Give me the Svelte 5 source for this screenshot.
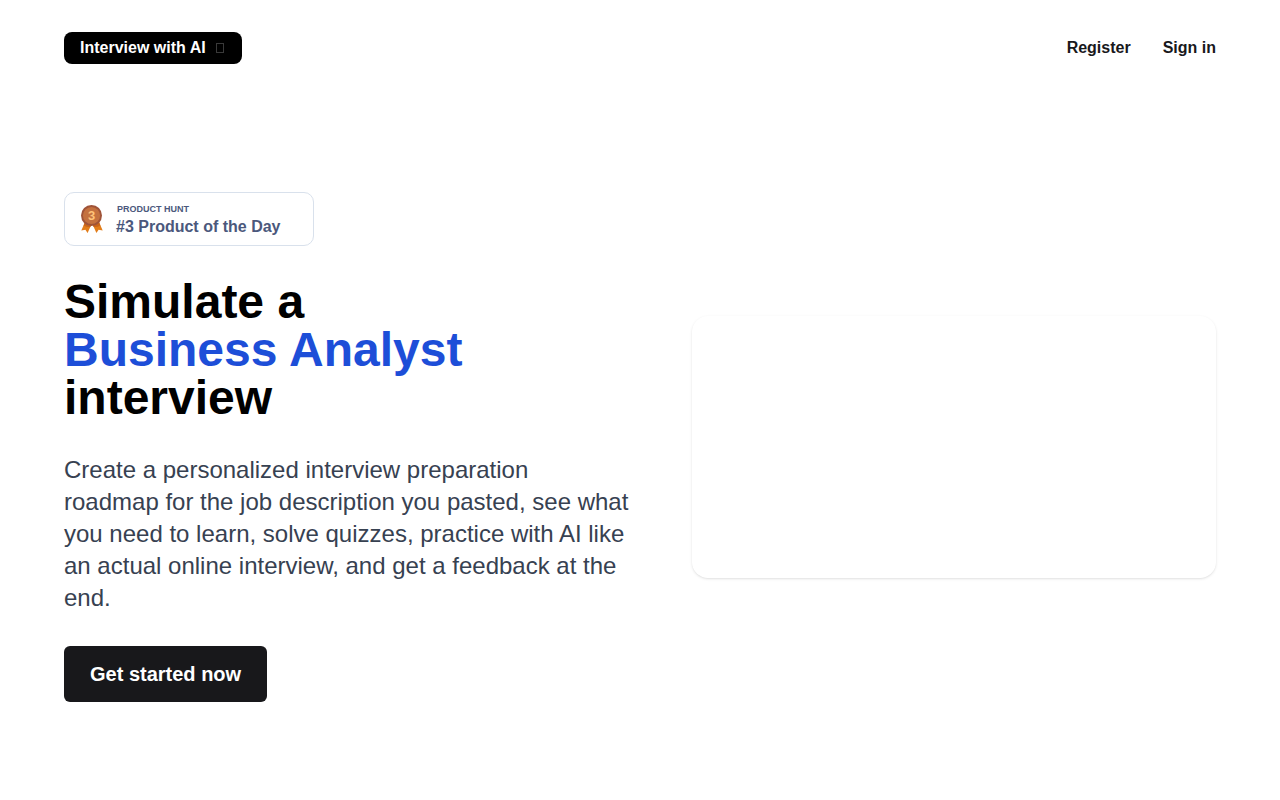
<script lang="ts">
	const role = 'Business Analyst';
</script>

<div class="page">
	<header>
		<a class="brand" href="/">
			Interview with AI
			<svg viewBox="0 0 12 12" width="12" height="12" aria-hidden="true">
				<rect x="2.5" y="1.5" width="7" height="9" fill="none" stroke="#3a3a3a" />
			</svg>
		</a>
		<nav>
			<a href="/register">Register</a>
			<a href="/login">Sign in</a>
		</nav>
	</header>

	<main>
		<section class="intro">
			<a class="badge" href="/product-hunt" aria-label="Product Hunt, #3 Product of the Day">
				<svg viewBox="0 0 22 28" width="22" height="28" aria-hidden="true">
					<path d="M4 17 L0.3 25.4 L4.4 24.7 L6.6 28 L10.6 19 Z" fill="#e27d1a" />
					<path d="M18 17 L21.7 25.4 L17.6 24.7 L15.4 28 L11.4 19 Z" fill="#e27d1a" />
					<path d="M4 17 L2.6 20.5 Q5.5 22.4 9.4 22 L10.6 19 Z M18 17 L19.4 20.5 Q16.5 22.4 12.6 22 L11.4 19 Z" fill="#c9651a" />
					<circle cx="10.5" cy="10.5" r="10.5" fill="#9f5338" />
					<circle cx="10.5" cy="10.5" r="8.6" fill="#c4713f" />
					<text x="10.5" y="15" text-anchor="middle">3</text>
				</svg>
				<span class="badge-text">
					<span class="badge-source">PRODUCT HUNT</span>
					<span class="badge-rank">#3 Product of the Day</span>
				</span>
			</a>

			<h1>Simulate a <br /><span class="role">{role}</span><br /> interview</h1>

			<p>
				Create a personalized interview preparation roadmap for the job description you pasted, see what you
				need to learn, solve quizzes, practice with AI like an actual online interview, and get a feedback at
				the end.
			</p>

			<button type="button">Get started now</button>
		</section>

		<div class="preview"></div>
	</main>
</div>

<style>
	:global(body) {
		background: #fff;
	}

	.page {
		padding: 32px 64px;
		font-family: 'Liberation Sans', Arial, sans-serif;
		color: #18181b;
	}

	header,
	nav {
		display: flex;
		align-items: center;
	}

	header {
		justify-content: space-between;
	}

	nav {
		gap: 32px;
	}

	a {
		color: inherit;
		text-decoration: none;
		font-weight: 700;
		font-size: 16px;
		line-height: 24px;
	}

	.brand {
		display: flex;
		align-items: center;
		gap: 8px;
		padding: 4px 16px;
		border-radius: 8px;
		background: #000;
		color: #fff;
	}

	main {
		display: grid;
		grid-template-columns: minmax(0, 1fr) minmax(0, 1fr);
		align-items: center;
		padding: 128px 0 64px;
	}

	.intro {
		display: flex;
		flex-direction: column;
		align-items: flex-start;
		gap: 32px;
		padding-right: 11px;
	}

	/* Product Hunt badge */
	.badge {
		display: flex;
		align-items: center;
		gap: 13px;
		box-sizing: border-box;
		width: 250px;
		height: 54px;
		padding: 0 16px;
		border: 1px solid #d9e1ec;
		border-radius: 10px;
		background: #fff;
		color: #4b587c;
	}

	.badge svg text {
		font-size: 13px;
		font-weight: 700;
		fill: #ffc278;
	}

	.badge-text {
		display: flex;
		flex-direction: column;
		gap: 2px;
		padding-top: 2px;
	}

	.badge-source {
		padding-left: 1px;
		font-size: 9px;
		line-height: 12px;
	}

	.badge-rank {
		font-size: 16px;
		line-height: 20px;
	}

	h1 {
		margin: 0;
		font-size: 48px;
		line-height: 48px;
		font-weight: 700;
		color: #000;
	}

	.role {
		color: #1d4ed8;
	}

	p {
		margin: 0;
		font-size: 24px;
		line-height: 32px;
		color: #374151;
	}

	button {
		height: 56px;
		padding: 0 26px;
		border: 0;
		border-radius: 6px;
		background: #18181b;
		color: #fff;
		font-family: inherit;
		font-size: 20px;
		font-weight: 700;
		cursor: pointer;
	}

	.preview {
		aspect-ratio: 2 / 1;
		margin-left: 52px;
		border-radius: 16px;
		box-shadow: 0 1px 3px rgba(0, 0, 0, 0.1), 0 1px 2px -1px rgba(0, 0, 0, 0.1);
	}
</style>
